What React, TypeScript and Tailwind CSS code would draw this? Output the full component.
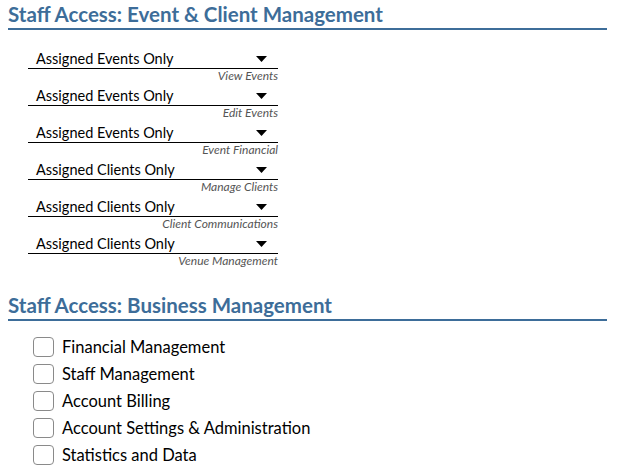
const selects = [
  { value: "Assigned Events Only", label: "View Events" },
  { value: "Assigned Events Only", label: "Edit Events" },
  { value: "Assigned Events Only", label: "Event Financial" },
  { value: "Assigned Clients Only", label: "Manage Clients" },
  { value: "Assigned Clients Only", label: "Client Communications" },
  { value: "Assigned Clients Only", label: "Venue Management" },
];

const checks = [
  "Financial Management",
  "Staff Management",
  "Account Billing",
  "Account Settings & Administration",
  "Statistics and Data",
];

function SectionTitle({ children }: { children: string }) {
  return (
    <h2 className="border-b-[2px] border-[#3d6d99] pb-[2px] text-[20.5px] leading-[24px] font-bold text-[#3d6d99]">
      {children}
    </h2>
  );
}

export default function App() {
  return (
    <div className="w-[630px] h-[475px] bg-white px-2 pt-[2px] text-black font-['Lato','Liberation_Sans',sans-serif] overflow-hidden">
      <div className="w-[599px]">
        <SectionTitle>Staff Access: Event &amp; Client Management</SectionTitle>

        <div className="mt-[16px] ml-5 w-[250px] flex flex-col">
          {selects.map((s, i) => (
            <div key={i} className="flex flex-col">
              <div className="h-[23px] flex items-center justify-between border-b border-black pt-[4px] pl-2 pr-[11px]">
                <span className="text-[14.5px] leading-[20px]">{s.value}</span>
                <svg width="11" height="6" viewBox="0 0 11 6">
                  <path d="M0 0h11L5.5 6z" fill="#000" />
                </svg>
              </div>
              <div className="h-[14px] text-right text-[12px] leading-[14px] italic text-[#555]">
                {s.label}
              </div>
            </div>
          ))}
        </div>

        <div className="mt-[25px]">
          <SectionTitle>Staff Access: Business Management</SectionTitle>
        </div>

        <div className="mt-[16px] ml-[25px] flex flex-col gap-[7px]">
          {checks.map((c) => (
            <label key={c} className="flex items-center gap-2">
              <span className="w-[21px] h-[20px] rounded-[4px] border-[1.5px] border-[#8a8a8a] bg-white" />
              <span className="text-[16.5px] leading-[20px]">{c}</span>
            </label>
          ))}
        </div>
      </div>
    </div>
  );
}
